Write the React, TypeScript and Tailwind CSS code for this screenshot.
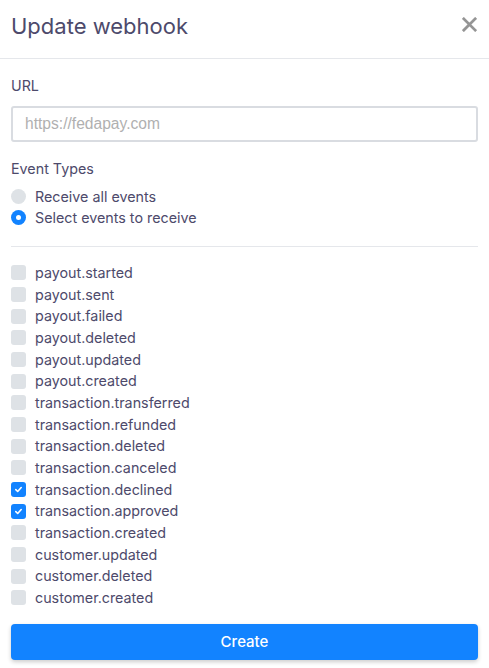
import React from "react";

const events: { name: string; checked: boolean }[] = [
  { name: "payout.started", checked: false },
  { name: "payout.sent", checked: false },
  { name: "payout.failed", checked: false },
  { name: "payout.deleted", checked: false },
  { name: "payout.updated", checked: false },
  { name: "payout.created", checked: false },
  { name: "transaction.transferred", checked: false },
  { name: "transaction.refunded", checked: false },
  { name: "transaction.deleted", checked: false },
  { name: "transaction.canceled", checked: false },
  { name: "transaction.declined", checked: true },
  { name: "transaction.approved", checked: true },
  { name: "transaction.created", checked: false },
  { name: "customer.updated", checked: false },
  { name: "customer.deleted", checked: false },
  { name: "customer.created", checked: false },
];

function Checkbox({ checked }: { checked: boolean }) {
  return checked ? (
    <span className="flex h-[15px] w-[15px] shrink-0 items-center justify-center rounded-[3px] bg-[#1283ff]">
      <svg width="9" height="9" viewBox="0 0 10 10" fill="none">
        <path d="M2 5.2 L4.1 7.2 L8 2.8" stroke="white" strokeWidth="1.8" strokeLinecap="round" strokeLinejoin="round" />
      </svg>
    </span>
  ) : (
    <span className="h-[15px] w-[15px] shrink-0 rounded-[3px] bg-[#dee2e6]" />
  );
}

function Radio({ checked }: { checked: boolean }) {
  return checked ? (
    <span className="flex h-[15px] w-[15px] shrink-0 items-center justify-center rounded-full bg-[#1283ff]">
      <span className="h-[5px] w-[5px] rounded-full bg-white" />
    </span>
  ) : (
    <span className="h-[15px] w-[15px] shrink-0 rounded-full bg-[#dee2e6]" />
  );
}

export default function App() {
  return (
    <div className="h-[668px] w-[489px] bg-white text-[#4d4a6b]" style={{ fontFamily: "Inter, 'Noto Sans', sans-serif" }}>
      <div className="flex items-start justify-between border-b border-[#e5e7eb] px-[11px] pt-[12px] pb-[18px]">
        <h1 className="text-[22px] leading-[28px] font-normal text-[#4d4a6b]">Update webhook</h1>
        <button className="mt-[5px] mr-[1px]" aria-label="Close">
          <svg width="15" height="15" viewBox="0 0 16 16">
            <path d="M2 2 L14 14 M14 2 L2 14" stroke="#959595" strokeWidth="3" strokeLinecap="square" />
          </svg>
        </button>
      </div>
      <div className="px-[11px]">
        <div className="mt-[17px] text-[14.3px] leading-[20px]">URL</div>
        <input
          className="mt-[10px] h-[36px] w-full rounded-[3px] border-2 border-[#d9dce1] px-[12px] pb-[1px] text-[15.6px] outline-none placeholder:text-[#b0b0b0]"
          style={{ fontFamily: "'Liberation Sans', Arial, sans-serif" }}
          placeholder="https://fedapay.com"
        />
        <div className="mt-[17px] text-[14.3px] leading-[20px]">Event Types</div>
        <div className="mt-[7px] flex flex-col">
          <label className="flex h-[21px] items-center gap-[9px] text-[14.3px]">
            <Radio checked={false} />
            <span>Receive all events</span>
          </label>
          <label className="flex h-[21px] items-center gap-[9px] text-[14.3px]">
            <Radio checked={true} />
            <span>Select events to receive</span>
          </label>
        </div>
        <div className="mt-[18px] border-t border-[#e5e7eb]" />
        <div className="mt-[15px] flex flex-col">
          {events.map((e) => (
            <label key={e.name} className="flex h-[21.67px] items-center gap-[9px] text-[14.3px]">
              <Checkbox checked={e.checked} />
              <span>{e.name}</span>
            </label>
          ))}
        </div>
        <button className="mt-[15px] flex h-[36px] w-full items-center justify-center rounded-[4px] bg-[#1283ff] pt-[2px] text-[15px] font-medium text-white shadow-[0_2px_4px_rgba(0,0,0,0.2)]">
          Create
        </button>
      </div>
    </div>
  );
}
